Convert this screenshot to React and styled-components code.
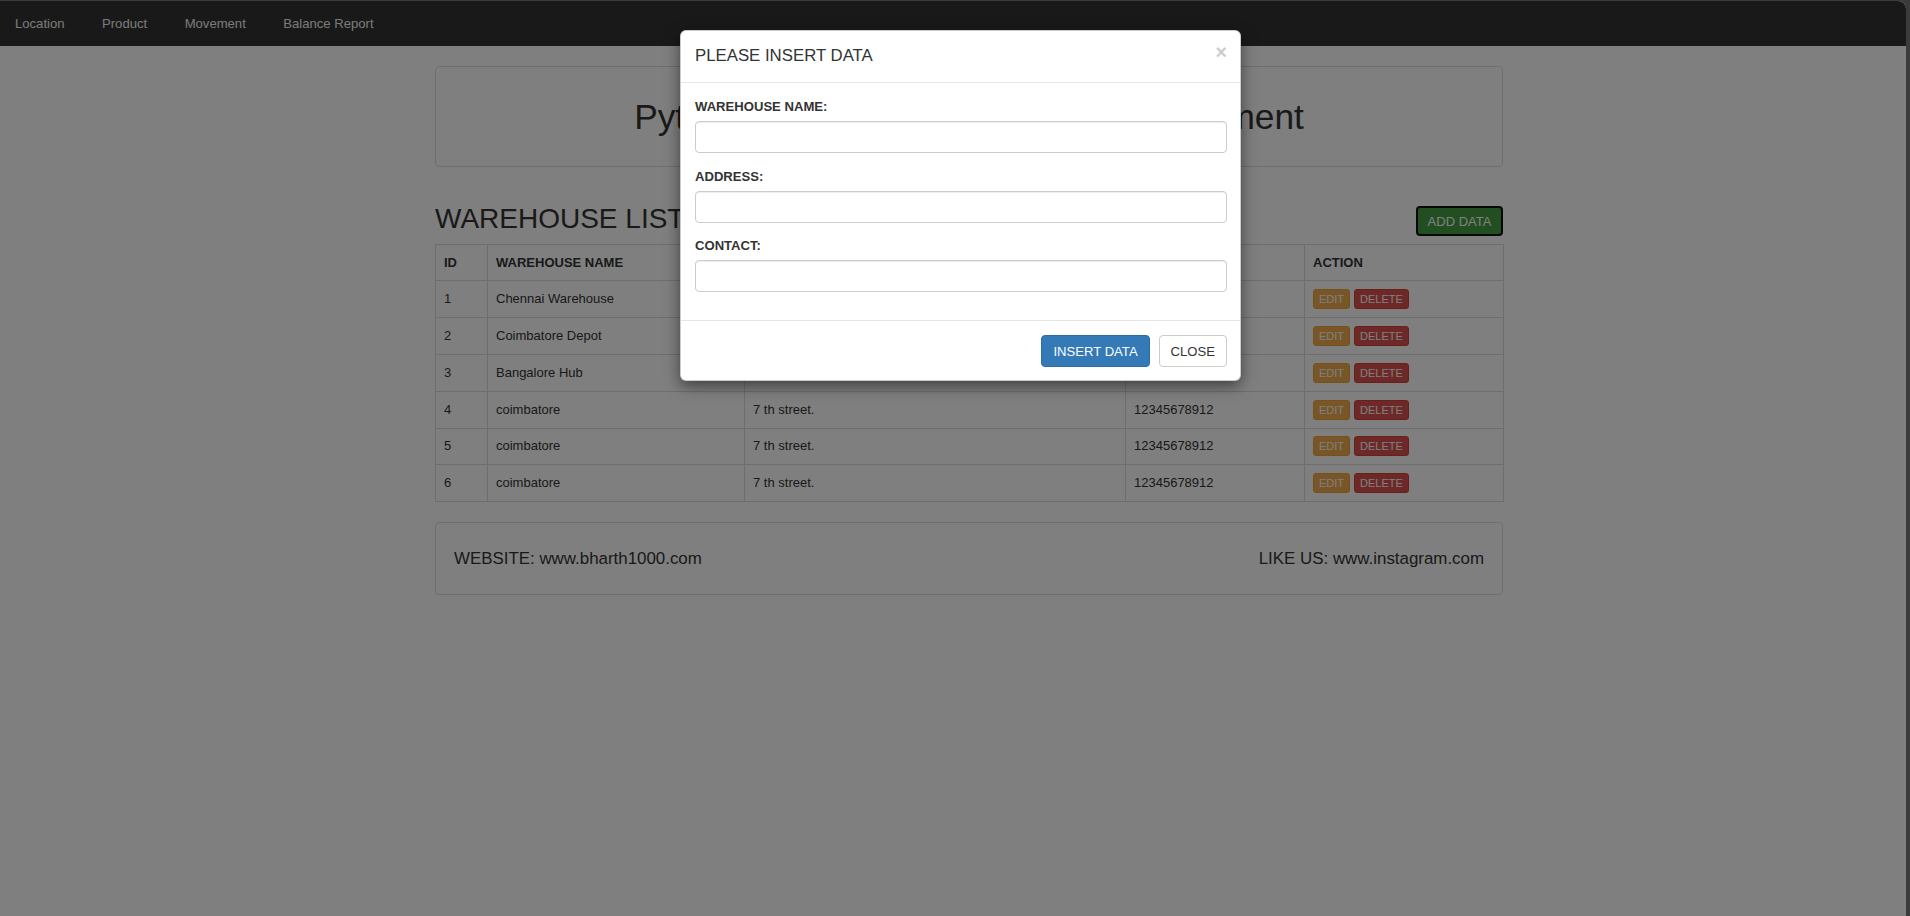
import React from 'react'
import styled, { createGlobalStyle } from 'styled-components'

const GlobalStyle = createGlobalStyle`
  html, body {
    margin: 0;
    padding: 0;
  }
  body {
    background: #3b3b3b;
    font-family: "Liberation Sans", Arial, Helvetica, sans-serif;
    font-size: 13px;
    color: #333;
  }
  * {
    box-sizing: border-box;
  }
`

const Window = styled.div`
  position: relative;
  margin-top: 1px;
  width: calc(100% - 4px);
  height: calc(100vh - 1px);
  overflow: hidden;
  background: #fff;
  border-top-right-radius: 8px;
`

const NavBar = styled.nav`
  height: 45px;
  background: #333;
  display: flex;
  align-items: center;
`

const NavList = styled.ul`
  list-style: none;
  margin: 0;
  padding: 0 0 0 15px;
  display: flex;
  gap: 37.5px;
`

const NavLink = styled.a`
  color: #f2f2f2;
  font-size: 13.1px;
  text-decoration: none;
`

const Container = styled.main`
  width: 1068px;
  margin-left: 435px;
  padding-top: 20px;
`

const Panel = styled.div`
  border: 1px solid #ddd;
  border-radius: 4px;
  height: ${(p) => p.$height}px;
  display: flex;
  align-items: center;
  justify-content: ${(p) => p.$justify || 'center'};
  padding: 0 18px;
`

const Title = styled.h1`
  margin: 0;
  font-size: 35.3px;
  font-weight: 400;
  color: #333;
`

const ListHeader = styled.div`
  margin-top: 36px;
  margin-bottom: 8px;
  display: flex;
  align-items: flex-end;
  justify-content: space-between;
`

const Heading = styled.h2`
  margin: 0 0 2px;
  font-size: 28px;
  line-height: 31px;
  font-weight: 400;
  color: #333;
`

const AddButton = styled.button`
  height: 30px;
  width: 87px;
  padding: 0;
  font-family: inherit;
  font-size: 13px;
  color: #fff;
  background: #449d44;
  border: 2px solid #111;
  border-radius: 4px;
`

const Table = styled.table`
  width: 100%;
  table-layout: fixed;
  border-collapse: collapse;
  border: 1px solid #ddd;
`

const Th = styled.th`
  width: ${(p) => p.$w}px;
  text-align: left;
  font-size: 13px;
  font-weight: 700;
  line-height: 20px;
  padding: 7.5px 8px;
  border: 1px solid #ddd;
  color: #333;
`

const Td = styled.td`
  font-size: 13px;
  line-height: 20px;
  padding: 7.95px 8px;
  border: 1px solid #ddd;
  color: #333;
  white-space: nowrap;
`

const ActionGroup = styled.div`
  display: flex;
  gap: 4px;
  height: 20px;
`

const ActionButton = styled.button`
  height: 20px;
  padding: 0 5px;
  font-family: inherit;
  font-size: 11px;
  color: #fff;
  background: ${(p) => (p.$danger ? '#d9534f' : '#f0ad4e')};
  border: 1px solid ${(p) => (p.$danger ? '#d43f3a' : '#eea236')};
  border-radius: 3px;
`

const Footer = styled(Panel)`
  margin-top: 20px;
`

const FooterText = styled.span`
  font-size: 16.9px;
  color: #333;
`

const Backdrop = styled.div`
  position: absolute;
  inset: 0;
  background: rgba(0, 0, 0, 0.5);
  z-index: 10;
`

const Modal = styled.div`
  position: absolute;
  top: 29px;
  left: 680px;
  width: 561px;
  z-index: 20;
  background: #fff;
  border: 1px solid rgba(0, 0, 0, 0.2);
  border-radius: 6px;
  box-shadow: 0 5px 15px rgba(0, 0, 0, 0.5);
`

const ModalHeader = styled.div`
  display: flex;
  align-items: center;
  justify-content: space-between;
  padding: 13px 13px 14px 14px;
  border-bottom: 1px solid #e5e5e5;
`

const ModalTitle = styled.h4`
  margin: 0;
  font-size: 16.8px;
  line-height: 24px;
  font-weight: 400;
  color: #333;
`

const CloseX = styled.button`
  padding: 0;
  margin-top: -6px;
  background: none;
  border: 0;
  font-family: inherit;
  font-size: 19.6px;
  font-weight: 700;
  line-height: 1;
  color: #000;
  opacity: 0.2;
  text-shadow: 0 1px 0 #fff;
`

const ModalBody = styled.div`
  padding: 14px 13px 14px 14px;
`

const FormGroup = styled.div`
  margin-bottom: ${(p) => (p.$last ? 14 : 13.5)}px;
`

const Label = styled.label`
  display: block;
  font-size: 13.1px;
  font-weight: 700;
  line-height: 19px;
  margin-bottom: 5px;
  color: #333;
`

const Input = styled.input`
  display: block;
  width: 100%;
  height: 32px;
  padding: 6px 11px;
  font-family: inherit;
  font-size: 13px;
  border: 1px solid #ccc;
  border-radius: 4px;
  box-shadow: inset 0 1px 1px rgba(0, 0, 0, 0.075);
`

const ModalFooter = styled.div`
  display: flex;
  justify-content: flex-end;
  gap: 9px;
  padding: 14px 13px 13px 14px;
  border-top: 1px solid #e5e5e5;
`

const ModalButton = styled.button`
  height: 32px;
  padding: 0 11px;
  font-family: inherit;
  font-size: 13.1px;
  border-radius: 4px;
  color: ${(p) => (p.$primary ? '#fff' : '#333')};
  background: ${(p) => (p.$primary ? '#337ab7' : '#fff')};
  border: 1px solid ${(p) => (p.$primary ? '#2e6da4' : '#ccc')};
`

const columns = [
  ['ID', 52],
  ['WAREHOUSE NAME', 257],
  ['ADDRESS', 381],
  ['CONTACT', 179],
  ['ACTION', 199],
]

const warehouses = [
  { id: 1, name: 'Chennai Warehouse', address: 'Anna Nagar, Chennai', contact: '9876543210' },
  { id: 2, name: 'Coimbatore Depot', address: 'Gandhipuram, Coimbatore', contact: '9876543211' },
  { id: 3, name: 'Bangalore Hub', address: 'MG Road, Bangalore', contact: '9876543212' },
  { id: 4, name: 'coimbatore', address: '7 th street.', contact: '12345678912' },
  { id: 5, name: 'coimbatore', address: '7 th street.', contact: '12345678912' },
  { id: 6, name: 'coimbatore', address: '7 th street.', contact: '12345678912' },
]

const navItems = ['Location', 'Product', 'Movement', 'Balance Report']

const App = () => {
  return (
    <Window>
      <GlobalStyle />
      <NavBar>
        <NavList>
          {navItems.map((item) => (
            <li key={item}>
              <NavLink href="#">{item}</NavLink>
            </li>
          ))}
        </NavList>
      </NavBar>

      <Container>
        <Panel $height={101}>
          <Title>Python Warehouse Inventory Management</Title>
        </Panel>

        <ListHeader>
          <Heading>WAREHOUSE LIST</Heading>
          <AddButton type="button">ADD DATA</AddButton>
        </ListHeader>

        <Table>
          <thead>
            <tr>
              {columns.map(([label, w]) => (
                <Th key={label} $w={w}>
                  {label}
                </Th>
              ))}
            </tr>
          </thead>
          <tbody>
            {warehouses.map((w) => (
              <tr key={w.id}>
                <Td>{w.id}</Td>
                <Td>{w.name}</Td>
                <Td>{w.address}</Td>
                <Td>{w.contact}</Td>
                <Td>
                  <ActionGroup>
                    <ActionButton type="button">EDIT</ActionButton>
                    <ActionButton type="button" $danger>
                      DELETE
                    </ActionButton>
                  </ActionGroup>
                </Td>
              </tr>
            ))}
          </tbody>
        </Table>

        <Footer $height={73} $justify="space-between">
          <FooterText>WEBSITE: www.bharth1000.com</FooterText>
          <FooterText>LIKE US: www.instagram.com</FooterText>
        </Footer>
      </Container>

      <Backdrop />

      <Modal>
        <ModalHeader>
          <ModalTitle>PLEASE INSERT DATA</ModalTitle>
          <CloseX type="button">×</CloseX>
        </ModalHeader>
        <ModalBody>
          <FormGroup>
            <Label>WAREHOUSE NAME:</Label>
            <Input type="text" />
          </FormGroup>
          <FormGroup>
            <Label>ADDRESS:</Label>
            <Input type="text" />
          </FormGroup>
          <FormGroup $last>
            <Label>CONTACT:</Label>
            <Input type="text" />
          </FormGroup>
        </ModalBody>
        <ModalFooter>
          <ModalButton type="button" $primary>
            INSERT DATA
          </ModalButton>
          <ModalButton type="button">CLOSE</ModalButton>
        </ModalFooter>
      </Modal>
    </Window>
  )
}

export default App
